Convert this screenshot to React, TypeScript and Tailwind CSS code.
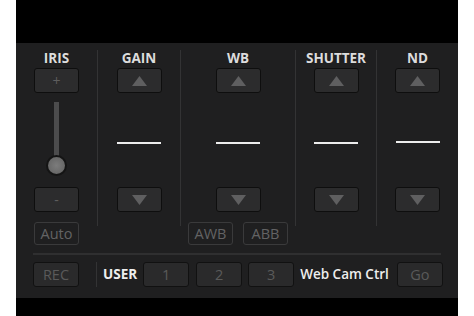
import React from 'react';

const font = { fontFamily: '"Open Sans", "Liberation Sans", sans-serif' };

function Tri({ down = false }: { down?: boolean }) {
  return (
    <svg width="15" height="10" viewBox="0 0 15 10">
      {down ? (
        <polygon points="0,0 15,0 7.5,10" fill="#5f5f60" />
      ) : (
        <polygon points="7.5,0 15,10 0,10" fill="#5f5f60" />
      )}
    </svg>
  );
}

function StepBtn({ children }: { children: React.ReactNode }) {
  return (
    <div className="w-[45px] h-[25px] rounded-[3px] bg-[#2c2c2d] border border-[#0e0e0e] flex items-center justify-center text-[14px] text-[#5e5e5e]">
      {children}
    </div>
  );
}

function OutlineBtn({ label }: { label: string }) {
  return (
    <div className="w-[45px] h-[23px] rounded-[3px] border border-[#3a3a3b] flex items-center justify-center text-[14.5px] text-[#636364]">
      {label}
    </div>
  );
}

function Dash() {
  return (
    <div className="h-[94px] pt-[49px]">
      <div className="w-[44px] h-[2px] bg-[#ececec]" />
    </div>
  );
}

function Label({ text }: { text: string }) {
  return <div className="h-[16px] leading-[16px] text-[13.5px] font-bold text-[#dcdcdc] mb-[2px]">{text}</div>;
}

function Divider() {
  return <div className="w-[1px] h-[176px] bg-[#333334]" />;
}

function Column({ label, width, children, extra }: { label: string; width: string; children: React.ReactNode; extra?: React.ReactNode }) {
  return (
    <div className={`${width} flex flex-col items-center`}>
      <Label text={label} />
      {children}
      {extra && <div className="mt-[10px] flex gap-[10px]">{extra}</div>}
    </div>
  );
}

function BarBtn({ label }: { label: string }) {
  return (
    <div className="w-[46px] h-[25px] rounded-[3px] bg-[#2a2a2b] border border-[#111] flex items-center justify-center text-[14.5px] text-[#5a5a5a]">
      {label}
    </div>
  );
}

export default function App() {
  return (
    <div className="w-[474px] h-[316px] bg-white" style={font}>
      <div className="ml-[16px] w-[442px] h-full flex flex-col bg-black">
        <div className="h-[43px]" />
        <div className="flex-1 bg-[#1f1f20] flex flex-col">
          <div className="flex items-start pt-[7px]">
            <Column
              label="IRIS"
              width="w-[81px]"
              extra={<OutlineBtn label="Auto" />}
            >
              <StepBtn>+</StepBtn>
              <div className="h-[94px] flex flex-col items-center">
                <div className="w-[5px] h-[55px] mt-[9px] bg-[#4c4c4d]" />
                <div className="w-[21px] h-[21px] -mt-[2px] rounded-full border-2 border-[#141414] bg-[radial-gradient(circle,#7c7c7c_0%,#686868_70%)]" />
              </div>
              <StepBtn>-</StepBtn>
            </Column>
            <Divider />
            <Column label="GAIN" width="w-[82px]">
              <StepBtn><Tri /></StepBtn>
              <Dash />
              <StepBtn><Tri down /></StepBtn>
            </Column>
            <Divider />
            <Column
              label="WB"
              width="w-[114px]"
              extra={
                <>
                  <OutlineBtn label="AWB" />
                  <OutlineBtn label="ABB" />
                </>
              }
            >
              <StepBtn><Tri /></StepBtn>
              <Dash />
              <StepBtn><Tri down /></StepBtn>
            </Column>
            <Divider />
            <Column label="SHUTTER" width="w-[80px]">
              <StepBtn><Tri /></StepBtn>
              <Dash />
              <StepBtn><Tri down /></StepBtn>
            </Column>
            <Divider />
            <Column label="ND" width="w-[81px]">
              <StepBtn><Tri /></StepBtn>
              <div className="h-[94px] pt-[48px]">
                <div className="w-[44px] h-[2px] bg-[#ececec]" />
              </div>
              <StepBtn><Tri down /></StepBtn>
            </Column>
          </div>
          <div className="mx-[17px] mt-[8px] h-[2px] bg-[#2f2f30]" />
          <div className="flex items-center mt-[7px] ml-[17px] h-[25px]">
            <BarBtn label="REC" />
            <div className="ml-[17px] w-[1px] h-[25px] bg-[#333334]" />
            <span className="ml-[6px] text-[13.5px] font-bold text-[#eeeeee]">USER</span>
            <div className="ml-[6px]"><BarBtn label="1" /></div>
            <div className="ml-[7px]"><BarBtn label="2" /></div>
            <div className="ml-[6px]"><BarBtn label="3" /></div>
            <span className="ml-[6px] text-[13.5px] font-semibold text-[#eeeeee]">Web Cam Ctrl</span>
            <div className="ml-[8px]"><BarBtn label="Go" /></div>
          </div>
          <div className="flex-1" />
        </div>
        <div className="h-[18px]" />
      </div>
    </div>
  );
}
